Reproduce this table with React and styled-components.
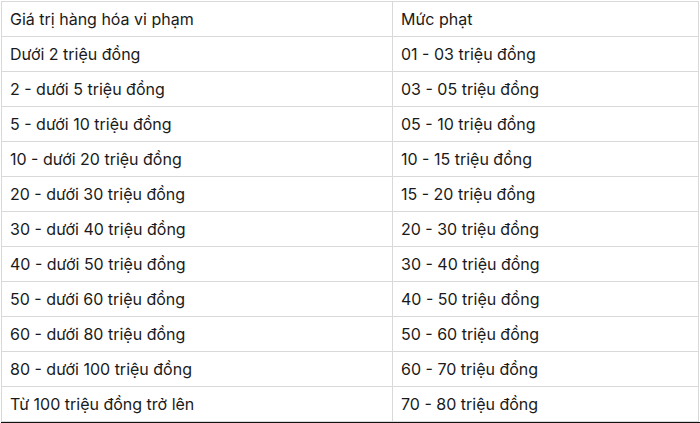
import React from "react";
import styled, { createGlobalStyle } from "styled-components";

const GlobalStyle = createGlobalStyle`
  html, body {
    margin: 0;
    padding: 0;
    background: #ffffff;
  }
  body {
    font-family: Inter, "Noto Sans", "DejaVu Sans", sans-serif;
    color: #1a1a1a;
  }
`;

const Page = styled.div`
  width: 700px;
  height: 423px;
  padding: 1px 0 0 1px;
  box-sizing: border-box;
  display: flex;
  flex-direction: column;
`;

const Table = styled.table`
  width: 698px;
  border-collapse: collapse;
  table-layout: fixed;
  font-size: 16px;
`;

const Cell = styled.td`
  height: 34px;
  padding: 0 8px;
  border: 1px solid #d9d9d9;
  vertical-align: middle;
  white-space: nowrap;
  width: ${props => props.width || "auto"};
`;

const BottomEdge = styled.div`
  margin-top: auto;
  height: 2px;
  background: #111111;
`;

const rows = [
  ["Giá trị hàng hóa vi phạm", "Mức phạt"],
  ["Dưới 2 triệu đồng", "01 - 03 triệu đồng"],
  ["2 - dưới 5 triệu đồng", "03 - 05 triệu đồng"],
  ["5 - dưới 10 triệu đồng", "05 - 10 triệu đồng"],
  ["10 - dưới 20 triệu đồng", "10 - 15 triệu đồng"],
  ["20 - dưới 30 triệu đồng", "15 - 20 triệu đồng"],
  ["30 - dưới 40 triệu đồng", "20 - 30 triệu đồng"],
  ["40 - dưới 50 triệu đồng", "30 - 40 triệu đồng"],
  ["50 - dưới 60 triệu đồng", "40 - 50 triệu đồng"],
  ["60 - dưới 80 triệu đồng", "50 - 60 triệu đồng"],
  ["80 - dưới 100 triệu đồng", "60 - 70 triệu đồng"],
  ["Từ 100 triệu đồng trở lên", "70 - 80 triệu đồng"],
];

export default function App() {
  return (
    <Page>
      <GlobalStyle />
      <Table>
        <tbody>
          {rows.map(([value, fine], i) => (
            <tr key={i}>
              <Cell width="374px">{value}</Cell>
              <Cell>{fine}</Cell>
            </tr>
          ))}
        </tbody>
      </Table>
      <BottomEdge />
    </Page>
  );
}
